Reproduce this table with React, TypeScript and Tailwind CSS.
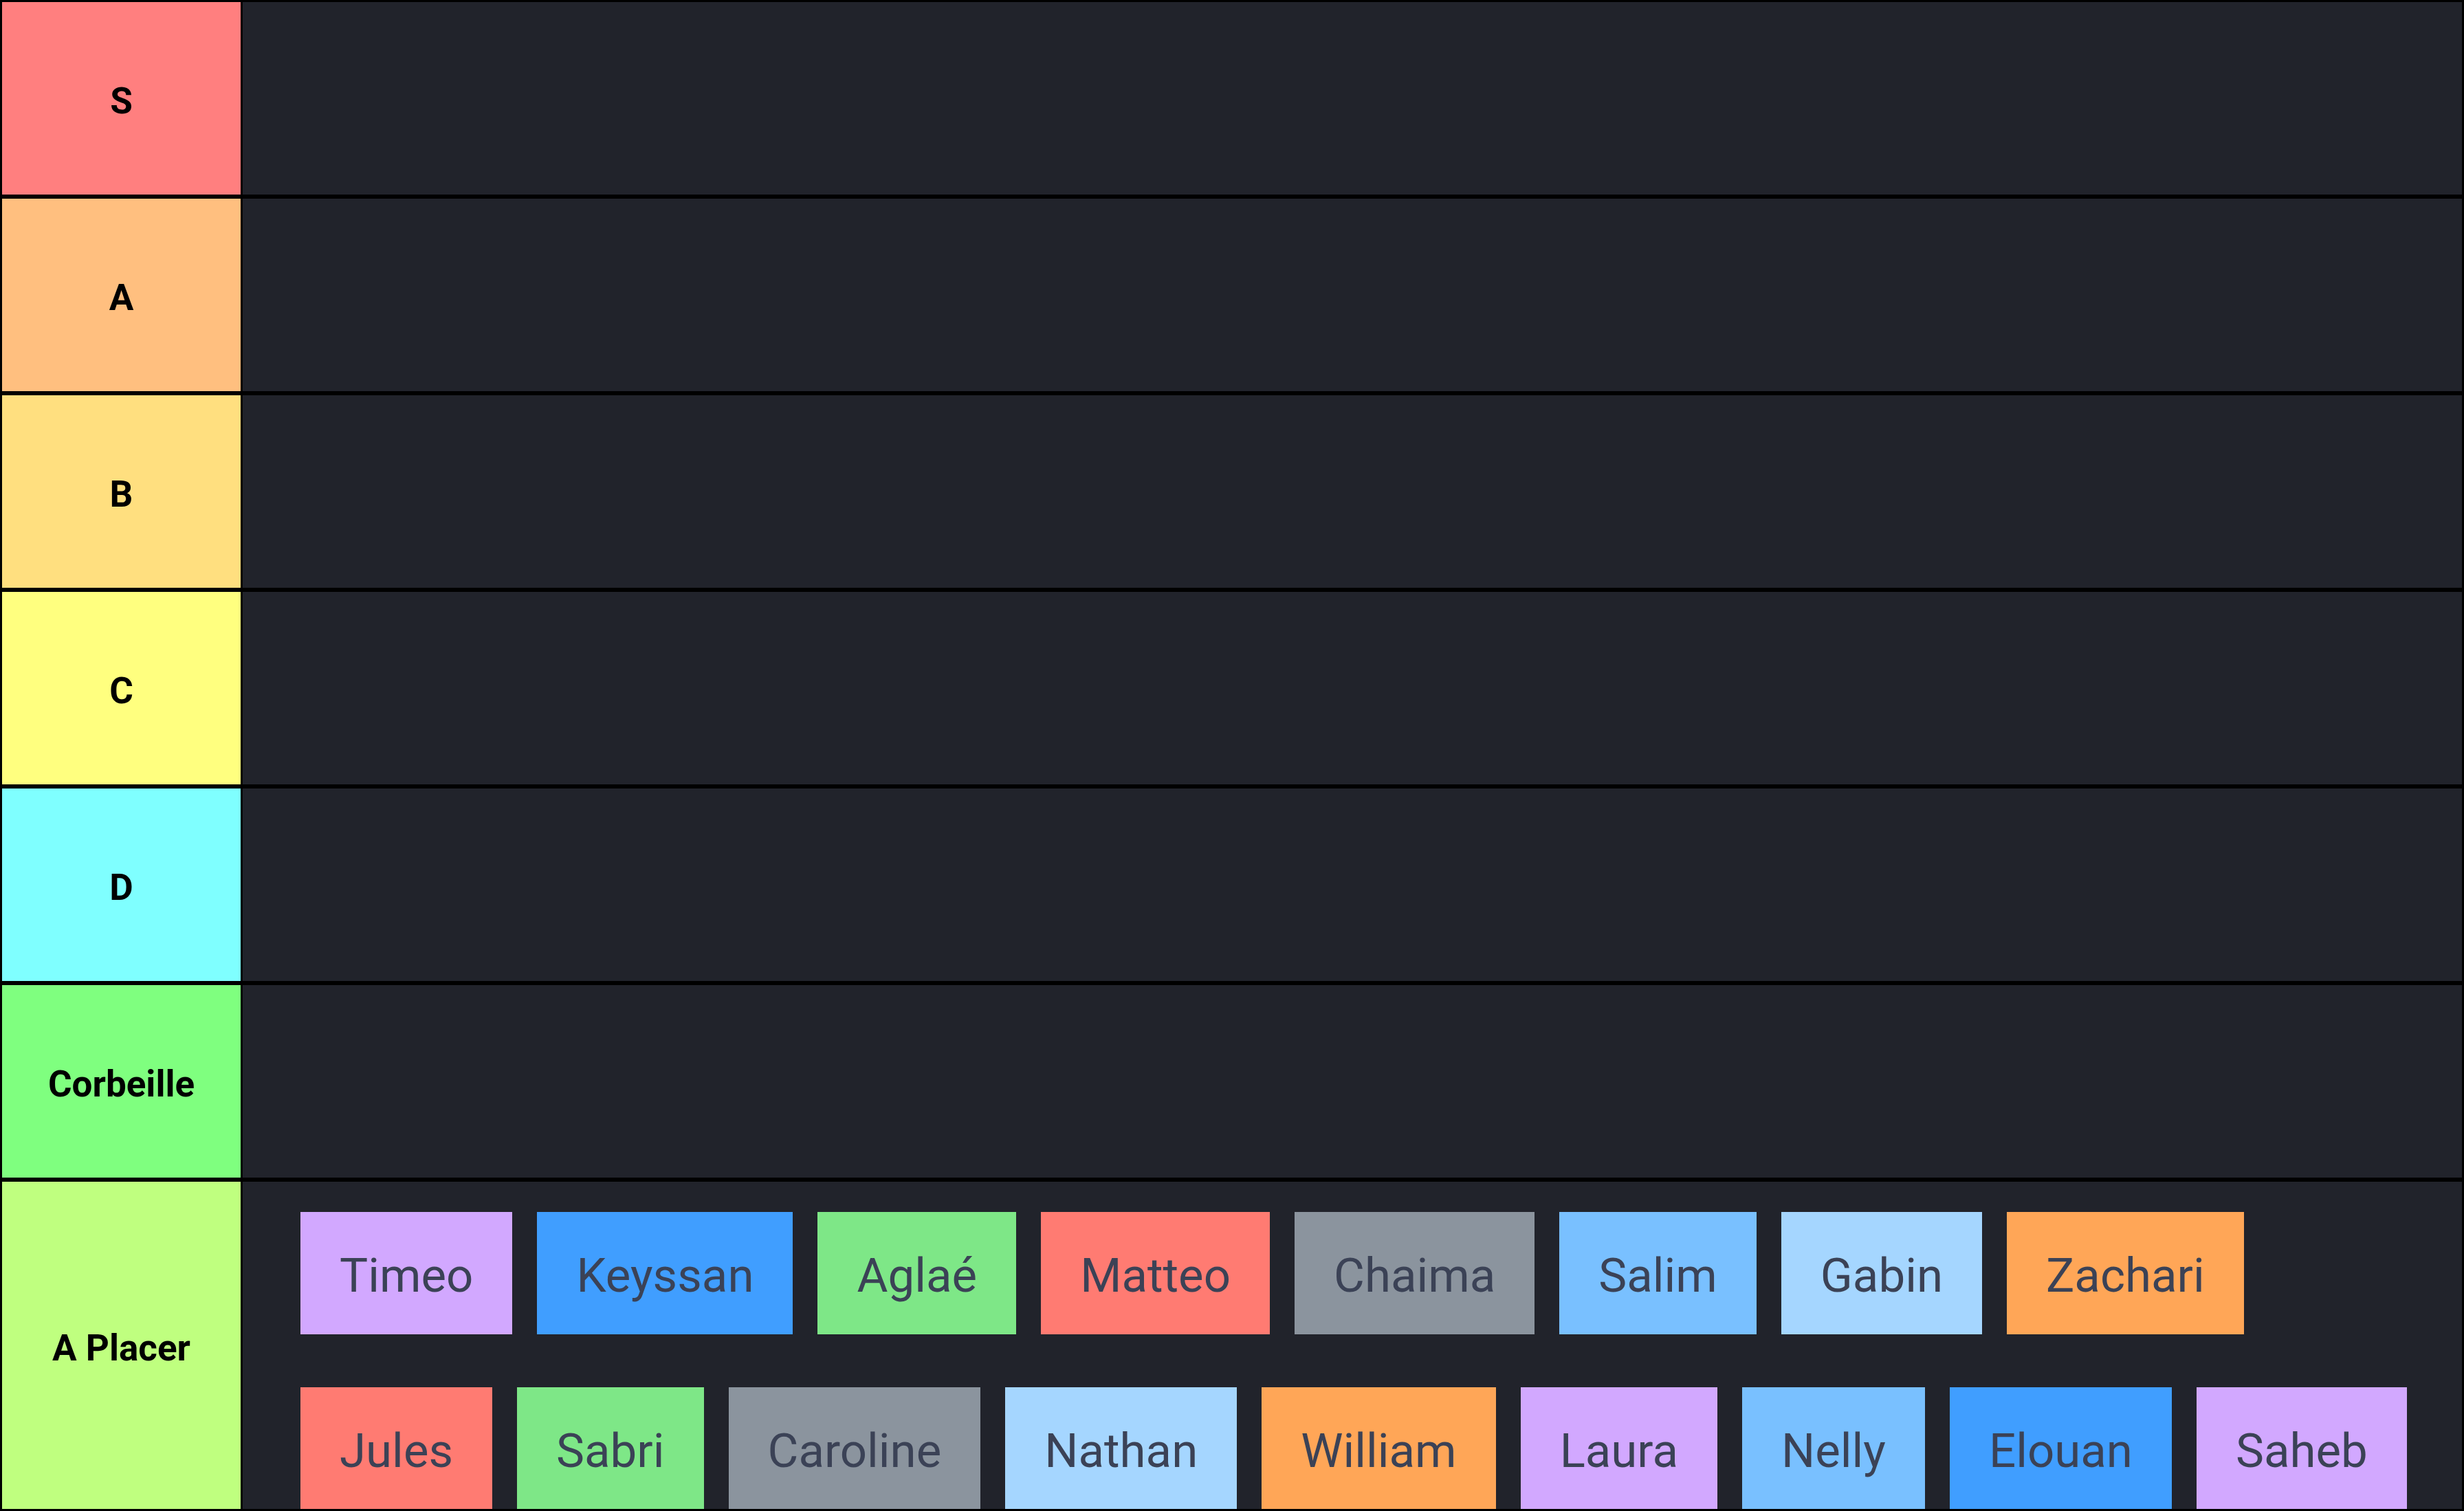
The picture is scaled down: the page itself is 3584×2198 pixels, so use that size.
import React from "react";

type Tier = { label: string; color: string };

const tiers: Tier[] = [
  { label: "S", color: "bg-[#ff7f7f]" },
  { label: "A", color: "bg-[#ffbf7f]" },
  { label: "B", color: "bg-[#ffdf7f]" },
  { label: "C", color: "bg-[#ffff7f]" },
  { label: "D", color: "bg-[#7fffff]" },
  { label: "Corbeille", color: "bg-[#7fff7f]" },
];

type Card = { name: string; color: string };

const row1: Card[] = [
  { name: "Timeo", color: "bg-[#d2a8ff]" },
  { name: "Keyssan", color: "bg-[#409eff]" },
  { name: "Aglaé", color: "bg-[#7ee787]" },
  { name: "Matteo", color: "bg-[#ff7b72]" },
  { name: "Chaima", color: "bg-[#8b949e]" },
  { name: "Salim", color: "bg-[#79c0ff]" },
  { name: "Gabin", color: "bg-[#a5d6ff]" },
  { name: "Zachari", color: "bg-[#ffa657]" },
];

const row2: Card[] = [
  { name: "Jules", color: "bg-[#ff7b72]" },
  { name: "Sabri", color: "bg-[#7ee787]" },
  { name: "Caroline", color: "bg-[#8b949e]" },
  { name: "Nathan", color: "bg-[#a5d6ff]" },
  { name: "William", color: "bg-[#ffa657]" },
  { name: "Laura", color: "bg-[#d2a8ff]" },
  { name: "Nelly", color: "bg-[#79c0ff]" },
  { name: "Elouan", color: "bg-[#409eff]" },
  { name: "Saheb", color: "bg-[#d2a8ff]" },
];

function Label({ text, color }: { text: string; color: string }) {
  return (
    <div
      className={`w-[347px] shrink-0 flex items-center justify-center pt-[9px] ${color} text-black font-bold text-[53px] leading-none`}
    >
      {text}
    </div>
  );
}

function CardItem({ card }: { card: Card }) {
  return (
    <div
      className={`h-[178px] shrink-0 flex items-center px-[57px] pt-[6px] ${card.color} text-[#3b4256] text-[69px] leading-none`}
    >
      {card.name}
    </div>
  );
}

export default function App() {
  return (
    <div
      className="w-[3584px] h-[2198px] bg-black p-[3px] flex flex-col gap-[6px] overflow-hidden"
      style={{ fontFamily: "Roboto, 'Noto Sans', sans-serif" }}
    >
      {tiers.map((t) => (
        <div key={t.label} className="h-[280px] shrink-0 flex gap-[3px]">
          <Label text={t.label} color={t.color} />
          <div className="flex-1 bg-[#21232b]" />
        </div>
      ))}
      <div className="flex-1 min-h-0 flex gap-[3px] overflow-hidden">
        <Label text="A Placer" color="bg-[#bfff7f]" />
        <div className="flex-1 bg-[#21232b] overflow-hidden pt-[44px] pl-[84px] flex flex-col gap-[77px]">
          <div className="flex gap-[36px]">
            {row1.map((c) => (
              <CardItem key={c.name} card={c} />
            ))}
          </div>
          <div className="flex gap-[36px]">
            {row2.map((c) => (
              <CardItem key={c.name} card={c} />
            ))}
          </div>
        </div>
      </div>
    </div>
  );
}
